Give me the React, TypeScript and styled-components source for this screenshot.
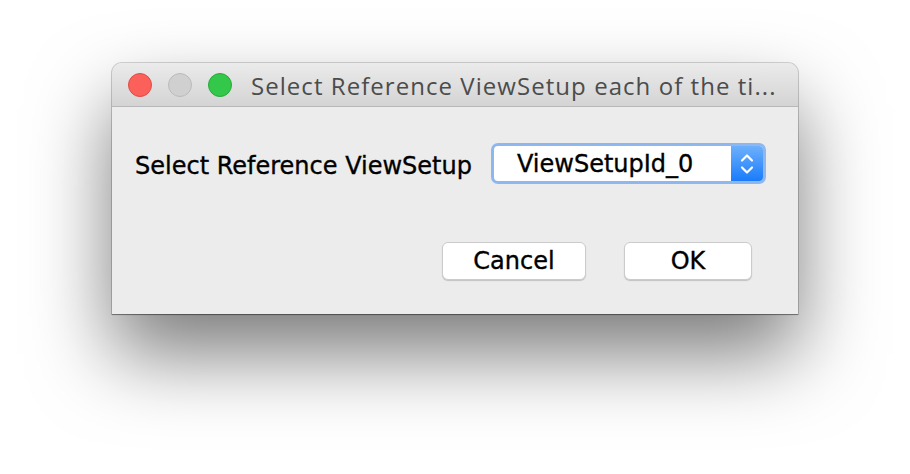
import React from "react";
import styled, { createGlobalStyle } from "styled-components";

const Global = createGlobalStyle`
  html, body { margin: 0; padding: 0; background: #ffffff; }
  #root { width: 910px; height: 474px; }
`;

const Page = styled.div`
  width: 910px;
  height: 474px;
  box-sizing: border-box;
  padding: 63px 0 0 112px;
  background: #ffffff;
  overflow: hidden;
`;

const Window = styled.div`
  width: 686px;
  height: 251px;
  display: flex;
  flex-direction: column;
  border-radius: 10px 10px 0 0;
  background: #ececec;
  box-shadow: 0 0 0 1px rgba(0, 0, 0, 0.16), 0 1px 1px rgba(0, 0, 0, 0.35),
    0 40px 80px rgba(0, 0, 0, 0.52);
  overflow: hidden;
`;

const TitleBar = styled.div`
  height: 43px;
  flex: none;
  display: flex;
  align-items: center;
  padding-left: 16px;
  background: linear-gradient(#ebebeb, #d4d4d4);
  border-bottom: 1px solid #b8b8b8;
`;

const Lights = styled.div`
  display: flex;
  gap: 16px;
  margin-right: 19px;
`;

const Light = styled.span<{ $fill: string; $edge: string }>`
  width: 24px;
  height: 24px;
  border-radius: 50%;
  box-sizing: border-box;
  background: ${(p) => p.$fill};
  border: 1px solid ${(p) => p.$edge};
`;

const Title = styled.div`
  font-family: "Open Sans", "Liberation Sans", Arial, sans-serif;
  font-size: 24px;
  letter-spacing: 1.05px;
  color: #4c4c4c;
  white-space: nowrap;
  margin-top: 1px;
`;

const Body = styled.div`
  flex: 1;
  display: flex;
  flex-direction: column;
  padding: 36px 32px 34px 23px;
`;

const Row = styled.div`
  display: flex;
  align-items: center;
  gap: 19px;
`;

const Label = styled.span`
  font-family: "DejaVu Sans", Verdana, sans-serif;
  font-size: 24px;
  color: #000;
  white-space: nowrap;
  -webkit-text-stroke: 0.35px #000;
  margin-top: 4px;
`;

const Select = styled.div`
  width: 275px;
  height: 41px;
  box-sizing: border-box;
  display: flex;
  border-radius: 7px;
  border: 3px solid #8db7ee;
  background: #ffffff;
  overflow: hidden;
`;

const SelectText = styled.div`
  flex: 1;
  display: flex;
  align-items: center;
  padding-left: 23px;
  font-family: "DejaVu Sans", Verdana, sans-serif;
  font-size: 24px;
  color: #000;
  white-space: nowrap;
  -webkit-text-stroke: 0.35px #000;
`;

const Stepper = styled.div`
  width: 32px;
  flex: none;
  display: flex;
  align-items: center;
  justify-content: center;
  background: linear-gradient(#6db0fc, #1a7cfb);
`;

const Footer = styled.div`
  margin-top: auto;
  display: flex;
  justify-content: flex-end;
  gap: 38px;
  padding-right: 14px;
`;

const Button = styled.button<{ $w: number }>`
  width: ${(p) => p.$w}px;
  height: 38px;
  box-sizing: border-box;
  background: #ffffff;
  border: 1px solid #cbcbcb;
  border-radius: 6px;
  box-shadow: 0 1px 1px rgba(0, 0, 0, 0.18);
  font-family: "DejaVu Sans", Verdana, sans-serif;
  font-size: 24px;
  color: #000;
  -webkit-text-stroke: 0.35px #000;
  padding: 0;
  display: flex;
  align-items: center;
  justify-content: center;
`;

export default function App() {
  return (
    <>
      <Global />
      <Page>
        <Window>
          <TitleBar>
            <Lights>
              <Light $fill="#fc605b" $edge="#df4a45" />
              <Light $fill="#d0d0d0" $edge="#bababa" />
              <Light $fill="#34c84a" $edge="#28a83a" />
            </Lights>
            <Title>Select Reference ViewSetup each of the ti...</Title>
          </TitleBar>
          <Body>
            <Row>
              <Label>Select Reference ViewSetup</Label>
              <Select>
                <SelectText>ViewSetupId_0</SelectText>
                <Stepper>
                  <svg width="14" height="24" viewBox="0 0 14 24" fill="none">
                    <path d="M2 8.5 L7 3.5 L12 8.5" stroke="#fff" strokeWidth="2.2" strokeLinecap="round" strokeLinejoin="round" />
                    <path d="M2 15.5 L7 20.5 L12 15.5" stroke="#fff" strokeWidth="2.2" strokeLinecap="round" strokeLinejoin="round" />
                  </svg>
                </Stepper>
              </Select>
            </Row>
            <Footer>
              <Button $w={144}>Cancel</Button>
              <Button $w={128}>OK</Button>
            </Footer>
          </Body>
        </Window>
      </Page>
    </>
  );
}
